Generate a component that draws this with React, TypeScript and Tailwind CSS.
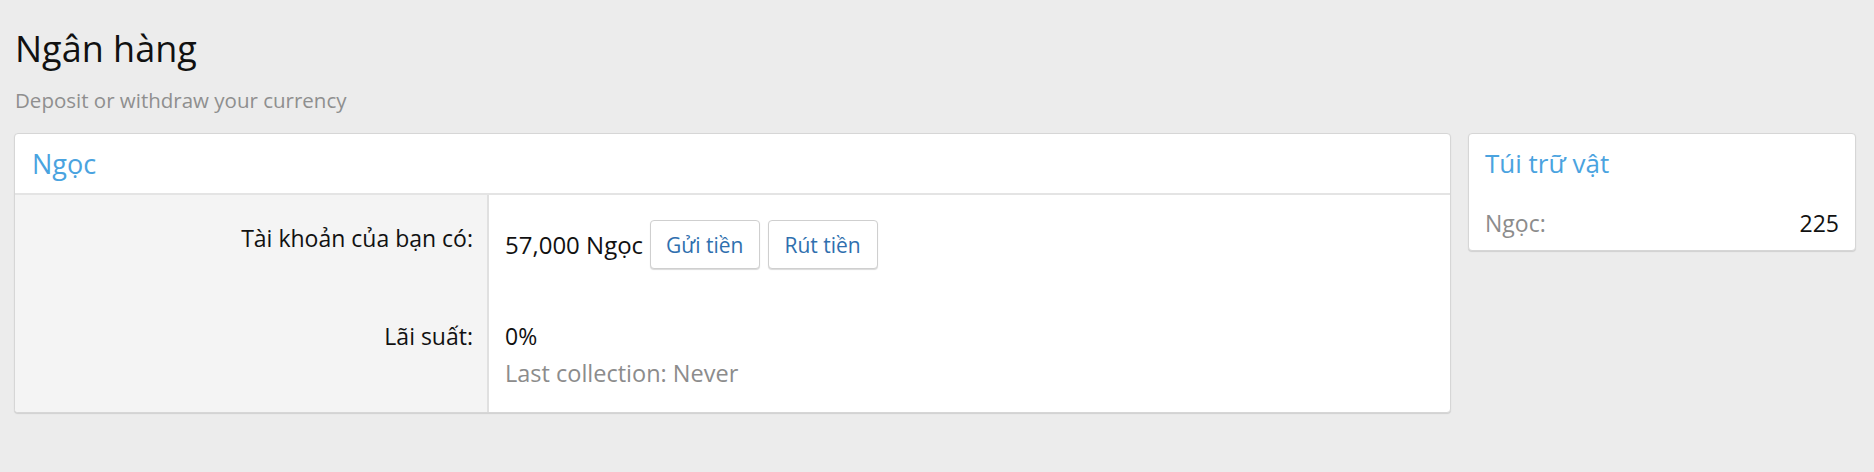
export default function App() {
  return (
    <div className="min-h-screen bg-[#ececec] font-['Open_Sans',sans-serif] text-[#111]">
      <div className="pl-[14px] pr-[18px] pt-[27px]">
        <h1 className="text-[36px] leading-[44px] pl-px">Ngân hàng</h1>
        <p className="mt-[15px] text-[20.5px] leading-[28px] text-[#8f8f8f] pl-px">
          Deposit or withdraw your currency
        </p>

        <div className="mt-[19px] flex items-start gap-[17px]">
          <div className="flex-1 overflow-hidden rounded-[4px] border border-[#d6d6d6] bg-white shadow-[0_1px_1px_rgba(0,0,0,0.12)]">
            <div className="h-[61px] flex items-center border-b-2 border-[#e4e4e4] px-[17px]">
              <h2 className="text-[27px] leading-[36px] text-[#4aa3df]">Ngọc</h2>
            </div>
            <div className="flex text-[23px] leading-[32px]">
              <div className="w-[474px] shrink-0 bg-[#f4f4f4] border-r-2 border-[#e0e0e0] pt-[25px] pb-[23px] pr-[14px] text-right">
                <div className="h-[49px] pt-[2px]">Tài khoản của bạn có:</div>
                <div className="mt-[51px]">Lãi suất:</div>
              </div>
              <div className="flex-1 pt-[25px] pb-[23px] pl-[16px]">
                <div className="flex items-center h-[49px] gap-[8px]">
                  <span className="text-[24px] mr-[-1px]">57,000 Ngọc</span>
                  <button className="h-[49px] px-[15px] text-[21px] rounded-[4px] border border-[#cfcfcf] bg-white text-[#2f6fae] shadow-[0_1px_1px_rgba(0,0,0,0.15)]">
                    Gửi tiền
                  </button>
                  <button className="h-[49px] px-[16px] text-[21px] rounded-[4px] border border-[#cfcfcf] bg-white text-[#2f6fae] shadow-[0_1px_1px_rgba(0,0,0,0.15)]">
                    Rút tiền
                  </button>
                </div>
                <div className="mt-[51px]">0%</div>
                <div className="mt-[5px] text-[23.5px] text-[#8c8c8c]">Last collection: Never</div>
              </div>
            </div>
          </div>

          <div className="w-[388px] rounded-[4px] border border-[#d6d6d6] bg-white shadow-[0_1px_1px_rgba(0,0,0,0.12)] px-[16px] pt-[11px] pb-[11px]">
            <h2 className="text-[26px] leading-[36px] text-[#4aa3df]">Túi trữ vật</h2>
            <div className="mt-[26px] flex justify-between text-[23px] leading-[32px]">
              <span className="text-[#8c8c8c]">Ngọc:</span>
              <span>225</span>
            </div>
          </div>
        </div>
      </div>
    </div>
  );
}
